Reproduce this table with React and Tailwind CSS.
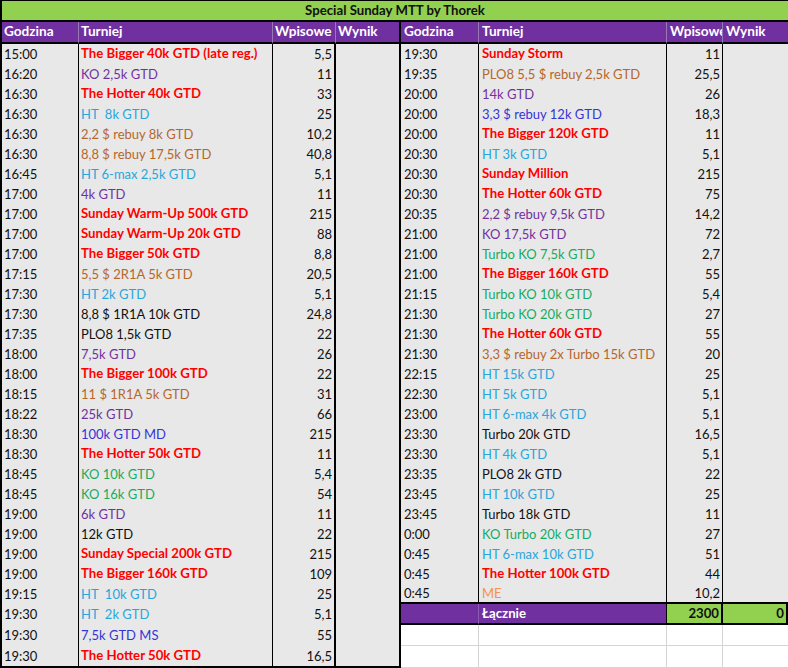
import React from "react";

const C = {
  red: "text-[#ff0000] font-bold text-[13.2px]",
  purple: "text-[#7030a0]",
  lblue: "text-[#27a6dc]",
  brown: "text-[#b5662c]",
  blue: "text-[#3434d6]",
  green: "text-[#16ab62]",
  black: "text-[#111]",
  orange: "text-[#f4934a]",
};

const left = [
  ["15:00", "The Bigger 40k GTD (late reg.)", "red", "5,5"],
  ["16:20", "KO 2,5k GTD", "purple", "11"],
  ["16:30", "The Hotter 40k GTD", "red", "33"],
  ["16:30", "HT\u00a0 8k GTD", "lblue", "25"],
  ["16:30", "2,2 $ rebuy 8k GTD", "brown", "10,2"],
  ["16:30", "8,8 $ rebuy 17,5k GTD", "brown", "40,8"],
  ["16:45", "HT 6-max 2,5k GTD", "lblue", "5,1"],
  ["17:00", "4k GTD", "purple", "11"],
  ["17:00", "Sunday Warm-Up 500k GTD", "red", "215"],
  ["17:00", "Sunday Warm-Up 20k GTD", "red", "88"],
  ["17:00", "The Bigger 50k GTD", "red", "8,8"],
  ["17:15", "5,5 $ 2R1A 5k GTD", "brown", "20,5"],
  ["17:30", "HT 2k GTD", "lblue", "5,1"],
  ["17:30", "8,8 $ 1R1A 10k GTD", "black", "24,8"],
  ["17:35", "PLO8 1,5k GTD", "black", "22"],
  ["18:00", "7,5k GTD", "purple", "26"],
  ["18:00", "The Bigger 100k GTD", "red", "22"],
  ["18:15", "11 $ 1R1A 5k GTD", "brown", "31"],
  ["18:22", "25k GTD", "purple", "66"],
  ["18:30", "100k GTD MD", "blue", "215"],
  ["18:30", "The Hotter 50k GTD", "red", "11"],
  ["18:45", "KO 10k GTD", "green", "5,4"],
  ["18:45", "KO 16k GTD", "green", "54"],
  ["19:00", "6k GTD", "purple", "11"],
  ["19:00", "12k GTD", "black", "22"],
  ["19:00", "Sunday Special 200k GTD", "red", "215"],
  ["19:00", "The Bigger 160k GTD", "red", "109"],
  ["19:15", "HT\u00a0 10k GTD", "lblue", "25"],
  ["19:30", "HT\u00a0 2k GTD", "lblue", "5,1"],
  ["19:30", "7,5k GTD MS", "blue", "55"],
  ["19:30", "The Hotter 50k GTD", "red", "16,5"],
];

const right = [
  ["19:30", "Sunday Storm", "red", "11"],
  ["19:35", "PLO8 5,5 $ rebuy 2,5k GTD", "brown", "25,5"],
  ["20:00", "14k GTD", "purple", "26"],
  ["20:00", "3,3 $ rebuy 12k GTD", "blue", "18,3"],
  ["20:00", "The Bigger 120k GTD", "red", "11"],
  ["20:30", "HT 3k GTD", "lblue", "5,1"],
  ["20:30", "Sunday Million", "red", "215"],
  ["20:30", "The Hotter 60k GTD", "red", "75"],
  ["20:35", "2,2 $ rebuy 9,5k GTD", "purple", "14,2"],
  ["21:00", "KO 17,5k GTD", "purple", "72"],
  ["21:00", "Turbo KO 7,5k GTD", "green", "2,7"],
  ["21:00", "The Bigger 160k GTD", "red", "55"],
  ["21:15", "Turbo KO 10k GTD", "green", "5,4"],
  ["21:30", "Turbo KO 20k GTD", "green", "27"],
  ["21:30", "The Hotter 60k GTD", "red", "55"],
  ["21:30", "3,3 $ rebuy 2x Turbo 15k GTD", "brown", "20"],
  ["22:15", "HT 15k GTD", "lblue", "25"],
  ["22:30", "HT 5k GTD", "lblue", "5,1"],
  ["23:00", "HT 6-max 4k GTD", "lblue", "5,1"],
  ["23:30", "Turbo 20k GTD", "black", "16,5"],
  ["23:30", "HT 4k GTD", "lblue", "5,1"],
  ["23:35", "PLO8 2k GTD", "black", "22"],
  ["23:45", "HT 10k GTD", "lblue", "25"],
  ["23:45", "Turbo 18k GTD", "black", "11"],
  ["0:00", "KO Turbo 20k GTD", "green", "27"],
  ["0:45", "HT 6-max 10k GTD", "lblue", "51"],
  ["0:45", "The Hotter 100k GTD", "red", "44"],
  ["0:45", "ME", "orange", "10,2"],
];

// the rows under the total line are a bit taller, as in the sheet
function rowH(i) {
  if (i === 30) return "h-[22px]";
  if (i === 28) return "h-[21px]";
  if (i === 29) return "h-[21px]";
  return "h-[20px]";
}

const base = "flex items-center whitespace-nowrap overflow-hidden";

function LeftCells({ row, i }) {
  const cell = `${base} ${rowH(i)} ${i === left.length - 1 ? "border-b-2 border-b-black" : ""}`;
  return (
    <>
      <div className={`${cell} bg-[#e8e8e8] border-l-2 border-r border-black pl-[2px] text-[#111]`}>{row[0]}</div>
      <div className={`${cell} bg-[#e8e8e8] border-r border-black pl-[2px] ${C[row[2]]}`}>{row[1]}</div>
      <div className={`${cell} bg-[#e8e8e8] border-r-2 border-black justify-end pr-[2px] text-[#111]`}>{row[3]}</div>
      <div className={`${cell} bg-[#e8e8e8] border-r-2 border-black`}></div>
    </>
  );
}

function RightCells({ i }) {
  const row = right[i];
  if (row) {
    const cell = `${base} ${rowH(i)} ${i === right.length - 1 ? "border-b-2 border-b-black" : ""}`;
    return (
      <>
        <div className={`${cell} bg-[#e8e8e8] border-r border-black pl-[3px] text-[#111]`}>{row[0]}</div>
        <div className={`${cell} bg-[#e8e8e8] border-r border-black pl-[3px] ${C[row[2]]}`}>{row[1]}</div>
        <div className={`${cell} bg-[#e8e8e8] border-r border-black justify-end pr-[2px] text-[#111]`}>{row[3]}</div>
        <div className={`${cell} bg-[#e8e8e8]`}></div>
      </>
    );
  }
  const cell = `${base} ${rowH(i)}`;
  if (i === right.length) {
    return (
      <>
        <div className={`${cell} bg-[#7030a0] border-b-2 border-b-black border-r border-r-[#8c5cb4]`}></div>
        <div className={`${cell} bg-[#7030a0] border-b-2 border-b-black border-r border-r-black pl-[3px] text-white font-bold text-[13.2px]`}>Łącznie</div>
        <div className={`${cell} bg-[#92d050] border-b-2 border-b-black border-r-2 border-r-black justify-end pr-[2px] text-[#111] font-bold text-[13.2px]`}>2300</div>
        <div className={`${cell} bg-[#92d050] border-b-2 border-b-black border-r-2 border-r-black justify-end pr-[2px] text-[#111] font-bold text-[13.2px]`}>0</div>
      </>
    );
  }
  return (
    <>
      <div className={`${cell} bg-white border-r border-b border-[#d4d4d4]`}></div>
      <div className={`${cell} bg-white border-r border-b border-[#d4d4d4]`}></div>
      <div className={`${cell} bg-white border-r border-b border-[#d4d4d4]`}></div>
      <div className={`${cell} bg-white border-b border-[#d4d4d4]`}></div>
    </>
  );
}

const heads = ["Godzina", "Turniej", "Wpisowe", "Wynik"];

export default function App() {
  return (
    <div className="w-[788px] h-[668px] overflow-hidden bg-white text-[13px] font-['Lato','Liberation_Sans',sans-serif] leading-none">
      <div className="h-[22px] bg-[#92d050] border-t border-l-2 border-b-2 border-black flex items-center justify-center font-bold text-[13.2px] text-[#111]">
        Special Sunday MTT by Thorek
      </div>
      <div className="grid grid-cols-[79px_194px_63px_65px_78px_188px_56px_1fr]">
        {heads.map((h, i) => (
          <div
            key={"l" + h}
            className={`h-[22px] ${base} bg-[#7030a0] text-white font-bold text-[13.6px] border-b-2 border-b-black pl-[2px] ${
              i === 0 ? "border-l-2 border-l-black" : ""
            } ${i === 3 ? "border-r-2 border-r-black" : "border-r border-r-[#9a78b8]"}`}
          >
            {h}
          </div>
        ))}
        {heads.map((h, i) => (
          <div
            key={"r" + h}
            className={`h-[22px] ${base} bg-[#7030a0] text-white font-bold text-[13.6px] border-b-2 border-b-black pl-[3px] ${
              i === 3 ? "" : "border-r border-r-[#9a78b8]"
            }`}
          >
            {h}
          </div>
        ))}
        {left.map((row, i) => (
          <React.Fragment key={i}>
            <LeftCells row={row} i={i} />
            <RightCells i={i} />
          </React.Fragment>
        ))}
      </div>
    </div>
  );
}
